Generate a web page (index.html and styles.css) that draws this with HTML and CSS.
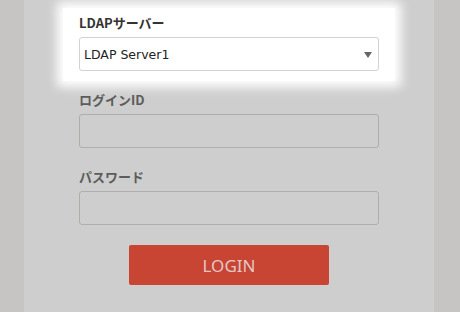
FILE: index.html
```html
<!DOCTYPE html>
<html lang="ja">
<head>
    <meta charset="UTF-8">
    <title>ログイン</title>
    <link rel="stylesheet" href="styles.css">
</head>
<body>
    <div class="panel">
        <form class="login_form">
            <div class="field focus">
                <label class="label">LDAPサーバー</label>
                <div class="select">
                    <span>LDAP Server1</span>
                    <i class="arrow"></i>
                </div>
            </div>
            <div class="field">
                <label class="label">ログインID</label>
                <div class="input"></div>
            </div>
            <div class="field">
                <label class="label">パスワード</label>
                <div class="input"></div>
            </div>
            <div class="btn_row">
                <button type="button" class="btn_login">LOGIN</button>
            </div>
        </form>
    </div>
</body>
</html>
```

FILE: styles.css
```css
* {
    margin: 0;
    padding: 0;
    box-sizing: border-box;
}
html, body {
    height: 100%;
}
body {
    background-color: #c7c5c3;
    font-family: "Noto Sans CJK JP", "Noto Sans", sans-serif;
    overflow: hidden;
}
.panel {
    height: 100%;
    width: 410px;
    margin-left: 24px;
    background-color: #cdcecd;
    padding-top: 8px;
}
.login_form {
    width: 300px;
    margin-left: 55px;
}
.field {
    margin-top: 10px;
    padding: 0 16px 10px;
    margin-left: -16px;
    margin-right: -16px;
}
.field.focus {
    margin-top: 0;
    padding-top: 6px;
    background-color: #fff;
    box-shadow: 0 0 10px 6px #fff;
}
.label {
    display: block;
    height: 18px;
    line-height: 18px;
    margin-bottom: 5px;
    font-size: 13px;
    font-weight: bold;
    color: #5c5c5c;
}
.focus .label {
    color: #333;
}
.select {
    height: 34px;
    border: 1px solid #d2d2d2;
    border-radius: 3px;
    background-color: #fff;
    display: flex;
    align-items: center;
    justify-content: space-between;
    padding: 0 6px 0 4px;
    font-family: "DejaVu Sans", "Noto Sans CJK JP", sans-serif;
    font-size: 12.5px;
    color: #222;
}
.arrow {
    width: 0;
    height: 0;
    border-left: 4px solid transparent;
    border-right: 4px solid transparent;
    border-top: 6px solid #666;
    margin-top: 1px;
}
.input {
    height: 34px;
    border: 1px solid #afaeac;
    border-radius: 3px;
}
.btn_row {
    display: flex;
    justify-content: center;
    padding-top: 10px;
}
.btn_login {
    width: 200px;
    height: 40px;
    border: 0;
    border-radius: 2px;
    background-color: #c84433;
    color: #e4c8c3;
    font-family: "Noto Sans", sans-serif;
    font-size: 17px;
}
```
